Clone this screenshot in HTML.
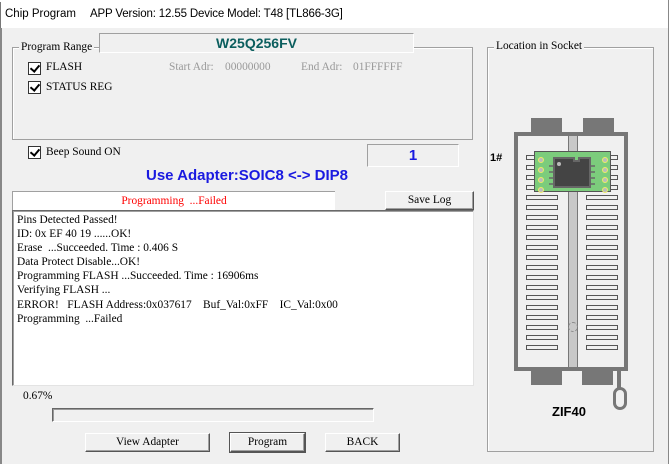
<!DOCTYPE html>
<html><head><style>
*{margin:0;padding:0;box-sizing:border-box}
body{width:671px;height:464px;background:#f0f0f0;position:relative;overflow:hidden;font-family:"Liberation Serif",serif;font-size:11.4px;color:#000}
.a{position:absolute}
.s{font-family:"Liberation Sans",sans-serif}
.cb{position:absolute;width:13px;height:13px;background:#fff;border:1px solid #333}
.cb:after{content:"";position:absolute;left:3px;top:0px;width:4px;height:7px;border:solid #000;border-width:0 2px 2px 0;transform:rotate(40deg)}
.btn{position:absolute;background:#f0f0f0;border:1px solid;border-color:#fff #555 #555 #fff;box-shadow:inset -1px -1px 0 #a0a0a0;text-align:center;line-height:16px}
.grp{position:absolute;border:1px solid #a0a0a0;box-shadow:inset 1px 1px 0 #fff}
.slot{position:absolute;width:32px;height:5px;border:1px solid #555;background:#f0f0f0}
</style></head><body>
<div class="a" style="left:0;top:0;width:671px;height:3px;background:#fff"></div>
<div class="a" style="left:0;top:2px;width:669px;height:26px;background:#fff;border-left:1px solid #777"></div>
<div class="a s" style="left:5px;top:8px;font-size:11.5px">Chip Program</div>
<div class="a s" style="left:90px;top:8px;font-size:11.5px;letter-spacing:-0.15px">APP Version: 12.55 Device Model: T48 [TL866-3G]</div>
<div class="a" style="left:0;top:28px;width:2px;height:436px;background:#888"></div>
<div class="a" style="left:668px;top:0;width:1px;height:464px;background:#888"></div>
<div class="a" style="left:669px;top:0;width:2px;height:464px;background:#fff"></div>

<div class="grp" style="left:12px;top:47px;width:461px;height:93px"></div>
<div class="a" style="left:19px;top:41px;background:#f0f0f0;padding:0 2px">Program Range</div>
<div class="a s" style="left:99px;top:33px;width:315px;height:20px;background:#f0f0f0;border:1px solid #a0a0a0;border-bottom-color:#fff;border-right-color:#fff;text-align:center;font-weight:bold;font-size:14px;color:#0b5e5e;line-height:18px">W25Q256FV</div>
<div class="cb" style="left:28px;top:62px"></div><div class="a" style="left:46px;top:61px">FLASH</div>
<div class="a" style="left:169px;top:61px;color:#999">Start Adr:</div>
<div class="a" style="left:225px;top:61px;color:#999">00000000</div>
<div class="a" style="left:301px;top:61px;color:#999">End Adr:</div>
<div class="a" style="left:353px;top:61px;color:#999">01FFFFFF</div>
<div class="cb" style="left:28px;top:81px"></div><div class="a" style="left:46px;top:81px">STATUS REG</div>

<div class="cb" style="left:28px;top:146px"></div><div class="a" style="left:46px;top:146px">Beep Sound ON</div>
<div class="a s" style="left:367px;top:144px;width:92px;height:23px;border:1px solid #a0a0a0;border-right-color:#fff;border-bottom-color:#fff;text-align:center;font-weight:bold;font-size:15px;color:#1a1ae0;line-height:21px">1</div>
<div class="a s" style="left:100px;top:167px;width:294px;text-align:center;font-weight:bold;font-size:15px;color:#1a1ae0">Use Adapter:SOIC8 &lt;-&gt; DIP8</div>

<div class="a" style="left:12px;top:191px;width:323px;height:19px;background:#fff;border-top:1px solid #a0a0a0;border-left:1px solid #a0a0a0;text-align:center;color:#f00;line-height:18px">Programming &nbsp;...Failed</div>
<div class="btn" style="left:385px;top:191px;width:89px;height:19px">Save Log</div>

<div class="a" style="left:12px;top:210px;width:462px;height:176px;background:#fff;border:1px solid;border-color:#696969 #e3e3e3 #e3e3e3 #696969;box-shadow:inset 1px 1px 0 #a0a0a0;padding:2px 0 0 4px;line-height:14.1px">
Pins Detected Passed!<br>ID: 0x EF 40 19 ......OK!<br>Erase &nbsp;...Succeeded. Time : 0.406 S<br>Data Protect Disable...OK!<br>Programming FLASH ...Succeeded. Time : 16906ms<br>Verifying FLASH ...<br>ERROR! &nbsp;&nbsp;FLASH Address:0x037617 &nbsp;&nbsp;&nbsp;Buf_Val:0xFF &nbsp;&nbsp;&nbsp;IC_Val:0x00<br>Programming &nbsp;...Failed</div>

<div class="a" style="left:23px;top:390px">0.67%</div>
<div class="a" style="left:52px;top:408px;width:322px;height:14px;border:1px solid;border-color:#666 #fff #fff #666;box-shadow:inset 1px 1px 0 #999"></div>
<div class="btn" style="left:85px;top:433px;width:125px;height:19px">View Adapter</div>
<div class="btn" style="left:230px;top:433px;width:75px;height:19px;outline:1px solid #555">Program</div>
<div class="btn" style="left:325px;top:433px;width:75px;height:19px">BACK</div>

<div class="grp" style="left:487px;top:47px;width:167px;height:405px"></div>
<div class="a" style="left:494px;top:40px;background:#f0f0f0;padding:0 2px">Location in Socket</div>

<div class="a" style="left:531px;top:118px;width:31px;height:15px;background:#777"></div>
<div class="a" style="left:583px;top:118px;width:31px;height:15px;background:#777"></div>
<div class="a" style="left:531px;top:369px;width:31px;height:16px;background:#777"></div>
<div class="a" style="left:582px;top:369px;width:31px;height:16px;background:#777"></div>
<div class="a" style="left:514px;top:132px;width:114px;height:239px;border:4px solid #777;background:#f0f0f0"></div>
<div class="a" style="left:568px;top:136px;width:10px;height:231px;background:#c8c8c8;border:1px solid #777;border-top:none;border-bottom:none"></div>
<div class="a" style="left:568px;top:322px;width:10px;height:10px;border:1px dashed #888;border-radius:50%"></div>
<div class="a" style="left:617px;top:369px;width:4px;height:20px;background:#777"></div>
<div class="a" style="left:613px;top:387px;width:14px;height:23px;border:3px solid #777;border-radius:7px"></div>
<div class="a s" style="left:490px;top:152px;font-weight:bold;font-size:11px">1#</div>
<div class="a s" style="left:552px;top:404px;font-weight:bold;font-size:13px">ZIF40</div>
<div id="slots"></div>
<script>
var h='';for(var i=0;i<20;i++){var y=155+i*10;h+='<div class="slot" style="left:526px;top:'+y+'px"></div><div class="slot" style="left:586px;top:'+y+'px"></div>';}
document.getElementById('slots').innerHTML=h;
</script>
<svg class="a" style="left:534px;top:151px" width="78" height="42">
<rect x="0.5" y="0.5" width="76" height="40" fill="#7ccc7c" stroke="#555"/>
<g stroke="#666" stroke-width="1.5"><line x1="15" y1="15" x2="22" y2="15"/><line x1="15" y1="21" x2="22" y2="21"/><line x1="15" y1="27" x2="22" y2="27"/><line x1="15" y1="33" x2="22" y2="33"/>
<line x1="54" y1="15" x2="61" y2="15"/><line x1="54" y1="21" x2="61" y2="21"/><line x1="54" y1="27" x2="61" y2="27"/><line x1="54" y1="33" x2="61" y2="33"/></g>
<path d="M20 7 H40 V10 H45 V7 H56 V36 H20 Z" fill="#444" stroke="#666" stroke-width="2"/>
<circle cx="25" cy="13" r="2" fill="#bbb"/>
<g fill="#bbb" stroke="#ee6" stroke-width="1"><circle cx="7" cy="9" r="2.5"/><circle cx="7" cy="19" r="2.5"/><circle cx="7" cy="29" r="2.5"/><circle cx="7" cy="39" r="2.5"/><circle cx="71" cy="9" r="2.5"/><circle cx="71" cy="19" r="2.5"/><circle cx="71" cy="29" r="2.5"/><circle cx="71" cy="39" r="2.5"/></g>
</svg>
</body></html>
